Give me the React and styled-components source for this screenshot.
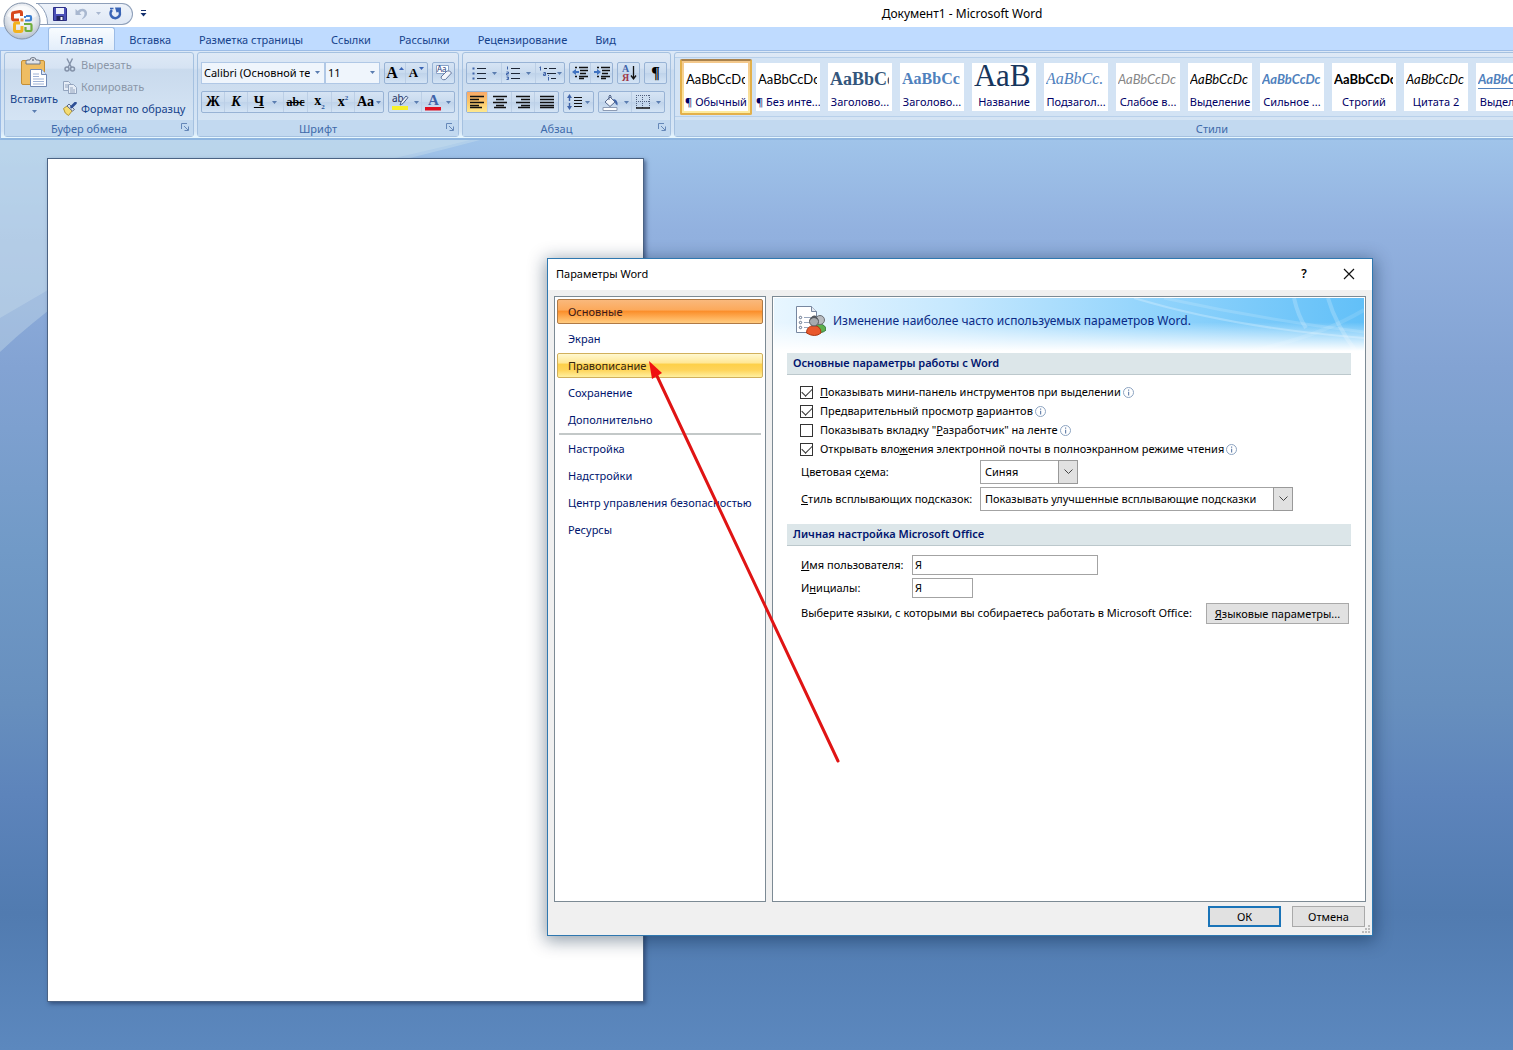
import React, { useState } from 'react';
import styled, { createGlobalStyle, css } from 'styled-components';

const GlobalStyle = createGlobalStyle`
  * {
    box-sizing: border-box;
  }

  body {
    margin: 0;
    background: #527cb1;
    color: #000;
    font-family: 'Noto Sans', 'Open Sans', sans-serif;
    font-size: 11px;
    line-height: 16px;
  }

  button,
  input,
  select {
    font: inherit;
    color: inherit;
  }
`;

const AppWindow = styled.div`
  position: relative;
  display: flex;
  flex-direction: column;
  min-height: 100vh;
  overflow: hidden;
`;

/* ---------- title bar ---------- */

const TitleBar = styled.header`
  display: grid;
  grid-template-columns: 411px 1fr;
  align-items: center;
  height: 27px;
  background: #fff;
`;

const QuickAccess = styled.div`
  display: flex;
  align-items: center;
  gap: 7px;
  padding-left: 36px;
`;

const QuickBar = styled.div`
  position: relative;
  display: flex;
  align-items: center;
  gap: 8px;
  width: 97px;
  height: 22px;
  padding-left: 17px;
  overflow: hidden;
  border: 1px solid #8e9fb9;
  border-left: none;
  border-radius: 0 11px 11px 0;
  background: linear-gradient(#eef3fa, #dfe8f5);

  &::before {
    content: '';
    position: absolute;
    left: -38px;
    top: -6px;
    width: 48px;
    height: 48px;
    border: 1px solid #8e9fb9;
    border-radius: 50%;
    background: #fff;
  }
`;

const IconButton = styled.button`
  display: flex;
  align-items: center;
  justify-content: center;
  padding: 0;
  border: none;
  background: none;
`;

const WindowTitle = styled.h1`
  margin: 0;
  font-size: 12px;
  font-weight: 400;
  text-align: center;
`;

const OfficeButton = styled.button`
  position: absolute;
  z-index: 2;
  left: 3px;
  top: 2px;
  width: 38px;
  height: 38px;
  padding: 0;
  border: none;
  background: none;
`;

/* ---------- ribbon ---------- */

const TabRow = styled.nav`
  display: flex;
  height: 23px;
  padding: 0 0 0 48px;
  background: #bfdbff;
`;

const Tab = styled.button`
  height: 24px;
  padding: 0 13px;
  border: 1px solid transparent;
  border-bottom: none;
  background: none;
  color: #15428b;
  line-height: 20px;
  white-space: nowrap;

  ${(props) =>
    props.$active &&
    css`
      padding: 0 11px;
      border-color: #9cbce6;
      border-radius: 3px 3px 0 0;
      background: linear-gradient(#f8fcff, #e2edfa);
    `}
`;

const Ribbon = styled.section`
  display: flex;
  gap: 3px;
  height: 90px;
  padding: 1px 0 1px 3px;
  overflow: hidden;
  border: 1px solid #9cbce6;
  border-right: none;
  border-bottom: 2px solid #8fb6e0;
  background: linear-gradient(#dbe8f7 0, #d5e3f3 20%, #cbdcf0 22%, #d6e6f6 92%, #e8f8ff 100%);
`;

const Group = styled.div`
  display: flex;
  flex: 0 0 ${(props) => props.$width}px;
  flex-direction: column;
  min-width: 0;
  border: 1px solid #a5c1e0;
  border-radius: 3px;
  background: linear-gradient(#dee9f6 0, #d6e3f3 18%, #c9daed 20%, #d8e7f6 100%);
`;

const GroupBody = styled.div`
  display: flex;
  flex: 1;
`;

const GroupLabel = styled.div`
  position: relative;
  height: 16px;
  padding-right: ${(props) => (props.$launcher ? 20 : 0)}px;
  background: #c2d9f0;
  color: #3e6aaa;
  line-height: 17px;
  text-align: center;

  ${IconButton} {
    position: absolute;
    right: 4px;
    top: 3px;
  }
`;

const PasteButton = styled.button`
  display: flex;
  flex-direction: column;
  align-items: center;
  gap: 3px;
  width: 58px;
  padding: 4px 0 0;
  border: none;
  background: none;
  color: #15428b;
`;

const ClipboardList = styled.div`
  display: flex;
  flex-direction: column;
  padding-top: 1px;
`;

const ClipboardButton = styled.button`
  display: flex;
  align-items: center;
  gap: 4px;
  height: 22px;
  padding: 0;
  border: none;
  background: none;
  color: #15428b;
  white-space: nowrap;

  &:disabled {
    color: #8b97a8;
  }
`;

const ToolRows = styled.div`
  display: flex;
  flex-direction: column;
  gap: 7px;
  padding: 9px 0 0 3px;
`;

const ToolRow = styled.div`
  display: flex;
  gap: 4px;
  height: 22px;
`;

const ToolSet = styled.div`
  display: flex;
  border: 1px solid #98b3d5;
  border-radius: 2px;
  background: linear-gradient(#d6e4f4 0, #c8daee 50%, #bfd3ea 51%, #d4e4f5 100%);
`;

const Tool = styled.button`
  display: flex;
  align-items: center;
  justify-content: center;
  gap: ${(props) => props.$gap || 3}px;
  width: ${(props) => props.$width || 21}px;
  padding: 0;
  border: none;
  border-right: 1px solid #bccfe6;
  background: ${(props) => (props.$active ? 'linear-gradient(#f9a968, #fdc86a 50%, #fde88e)' : 'none')};
  font-family: 'Liberation Serif', serif;
  font-size: ${(props) => props.$size || 14}px;
  font-weight: 700;
  font-style: ${(props) => (props.$italic ? 'italic' : 'normal')};
  text-decoration: ${(props) => props.$decoration || 'none'};

  &:last-child {
    border-right: none;
  }

  sub,
  sup {
    color: #2b579a;
    font-size: 7px;
    line-height: 7px;
  }
`;

const Combos = styled.div`
  display: flex;
`;

const RibbonCombo = styled.span`
  position: relative;
  display: flex;
  width: ${(props) => props.$width}px;
  border: 1px solid #b0c8e6;
  background: #eff5fc;

  select {
    width: 100%;
    padding: 0 14px 0 2px;
    appearance: none;
    border: none;
    background: none;
    overflow: hidden;
  }

  svg {
    position: absolute;
    right: 4px;
    top: 8px;
    pointer-events: none;
  }
`;

const Gallery = styled.div`
  display: flex;
  align-items: flex-start;
  width: 100%;
  height: 60px;
  margin-top: 4px;
  padding: 1px 5px;
  border-top: 1px solid #b8d0ea;
  border-bottom: 1px solid #b8d0ea;
  background: #d3e3f4;
`;

const StyleTile = styled.button`
  display: flex;
  flex: 0 0 72px;
  flex-direction: column;
  height: 56px;
  padding: 2px;
  border: 2px solid ${(props) => (props.$active ? '#e3b04b' : 'transparent')};
  border-top-color: ${(props) => (props.$active ? '#a9824c' : 'transparent')};
  border-radius: 2px;
  background: ${(props) => (props.$active ? 'linear-gradient(#f3c88c, #fdeca0)' : 'none')};
  color: #000066;
`;

const StylePreview = styled.span`
  display: block;
  width: 64px;
  height: 31px;
  padding: 0 3px 0 2px;
  overflow: hidden;
  background: #fff;
  color: ${(props) => props.$color || '#000'};
  font-family: ${(props) => (props.$serif ? "'Liberation Serif', serif" : 'Lato, sans-serif')};
  font-size: ${(props) => props.$size || 13}px;
  font-weight: ${(props) => (props.$bold ? 700 : 400)};
  font-style: ${(props) => (props.$italic ? 'italic' : 'normal')};
  line-height: ${(props) => (props.$size > 20 ? 26 : 32)}px;
  text-align: left;
  white-space: nowrap;

  span {
    display: block;
    overflow: hidden;
    text-decoration: ${(props) => (props.$underline ? 'underline' : 'none')};
    text-underline-offset: 4px;
  }
`;

const StyleName = styled.span`
  display: block;
  width: 64px;
  height: 17px;
  overflow: hidden;
  background: #fff;
  text-align: center;
  white-space: nowrap;
`;

/* ---------- workspace ---------- */

const Workspace = styled.main`
  position: relative;
  flex: 1;
  padding: 18px 47px 48px;
  background: linear-gradient(
    #a0c4ea 0,
    #92b1df 10%,
    #83a3d3 25%,
    #719ac7 45%,
    #678fbe 62%,
    #5d84bb 72%,
    #517bb0 85%,
    #5c88be 100%
  );
`;

const Swoosh = styled.svg`
  position: absolute;
  left: 0;
  top: 0;
`;

const Page = styled.article`
  position: relative;
  width: 597px;
  height: 844px;
  border: 1px solid #4b6384;
  background: #fff;
  box-shadow: 2px 2px 4px rgba(30, 50, 90, 0.6);
`;

/* ---------- options dialog ---------- */

const Dialog = styled.div`
  position: absolute;
  z-index: 3;
  left: 547px;
  top: 258px;
  display: flex;
  flex-direction: column;
  width: 826px;
  border: 1px solid #2f78b0;
  background: #f0f0f0;
  box-shadow: 0 3px 16px 2px rgba(0, 30, 60, 0.42);
`;

const DialogTitle = styled.div`
  display: flex;
  align-items: center;
  height: 31px;
  padding: 0 17px 2px 8px;
  background: #fff;
`;

const DialogName = styled.h2`
  flex: 1;
  margin: 0;
  font-size: 11px;
  font-weight: 400;
`;

const TitleButton = styled(IconButton)`
  width: 12px;
  margin-left: 33px;
  font-size: 12px;
  font-weight: 600;
`;

const DialogBody = styled.div`
  display: grid;
  grid-template-columns: 212px 1fr;
  gap: 6px;
  height: 612px;
  padding: 6px 6px 0;
`;

const SideNav = styled.nav`
  display: flex;
  flex-direction: column;
  gap: 2px;
  padding: 2px;
  border: 1px solid #7c8a94;
  background: #fff;
`;

const NavItem = styled.button`
  height: 25px;
  padding: 0 10px;
  border: 1px solid transparent;
  border-radius: 2px;
  background: none;
  color: #00156e;
  text-align: left;
  white-space: nowrap;

  ${(props) =>
    props.$state === 'selected' &&
    css`
      border-color: #b07a45;
      background: linear-gradient(#f9b87c 0, #fcaa5c 42%, #fb8f2c 50%, #ffb45e 80%, #ffcb80 100%);
      color: #3b1a1a;
    `}

  ${(props) =>
    props.$state === 'hover' &&
    css`
      border-color: #d1b05c;
      background: linear-gradient(#fff8d0 0, #ffe897 38%, #fdd04a 45%, #fed45a 70%, #fff0a0 100%);
      color: #33240f;
    `}
`;

const NavDivider = styled.hr`
  width: 202px;
  height: 2px;
  margin: -1px auto;
  border: none;
  background: #c3c8c8;
`;

const Content = styled.section`
  border: 1px solid #7c8a94;
  background: #fff;
`;

const Banner = styled.div`
  position: relative;
  display: flex;
  align-items: center;
  gap: 7px;
  height: 54px;
  margin: 1px;
  padding: 0 20px 8px;
  overflow: hidden;
  background:
    linear-gradient(rgba(255, 255, 255, 0) 45%, #fff 98%),
    linear-gradient(90deg, #e8f6ff 0, #c6e8fe 30%, #95d5fc 62%, #62c0f8 100%);
  color: #0b2a85;
  font-size: 12px;
`;

const BannerLines = styled.svg`
  position: absolute;
  right: 0;
  top: 0;
`;

const SectionTitle = styled.h3`
  height: 22px;
  margin: 0 14px;
  padding: 0 6px;
  border-bottom: 1px solid #bcc8cc;
  background: #dce6e9;
  color: #00156e;
  font-size: 11px;
  font-weight: 600;
  line-height: 20px;
`;

const Fields = styled.div`
  display: flex;
  flex-direction: column;
  gap: 3px;
  padding: 9px 16px 13px 28px;
`;

const CheckLabel = styled.label`
  display: flex;
  align-items: center;
  gap: 2px;
  height: 16px;
  white-space: nowrap;

  span {
    margin-left: 5px;
  }
`;

const CheckBox = styled.input`
  position: relative;
  width: 13px;
  height: 13px;
  margin: 0 0 0 -1px;
  appearance: none;
  border: 1px solid #333;
  background: #fff;

  &:checked::after {
    content: '';
    position: absolute;
    left: 1px;
    top: 1px;
    width: 9px;
    height: 5px;
    border: solid #333;
    border-width: 0 0 1px 1px;
    transform: rotate(-45deg);
  }
`;

const FieldRow = styled.div`
  display: flex;
  align-items: center;
  height: ${(props) => props.$height || 20}px;
`;

const FieldLabel = styled.label`
  flex: 0 0 ${(props) => props.$width}px;
  white-space: nowrap;
`;

const TextInput = styled.input`
  width: ${(props) => props.$width}px;
  height: 20px;
  padding: 0 2px 1px;
  border: 1px solid #a3a3a3;
  background: #fff;
`;

const SelectBox = styled.span`
  position: relative;
  display: flex;
  width: ${(props) => props.$width}px;
  height: 24px;

  select {
    width: 100%;
    padding: 0 20px 0 4px;
    appearance: none;
    border: 1px solid #a3a3a3;
    border-radius: 0;
    background: #fff;
  }
`;

const SelectArrow = styled.span`
  position: absolute;
  right: 0;
  top: 0;
  display: flex;
  align-items: center;
  justify-content: center;
  width: 20px;
  height: 24px;
  border: 1px solid #999;
  background: #e1e1e1;
  pointer-events: none;
`;

const PushButton = styled.button`
  width: ${(props) => props.$width || 73}px;
  height: 21px;
  padding: 0;
  border: ${(props) => (props.$primary ? '2px solid #1a74b8' : '1px solid #a9a9a9')};
  background: #e1e1e1;
  line-height: 17px;
  white-space: nowrap;
`;

const LanguageRow = styled(FieldRow)`
  justify-content: space-between;
  margin-top: 1px;
`;

const DialogFooter = styled.div`
  position: relative;
  display: flex;
  justify-content: flex-end;
  gap: 11px;
  height: 33px;
  padding: 4px 7px 0;
`;

const Grip = styled.svg`
  position: absolute;
  right: 1px;
  bottom: 1px;
`;

const Pointer = styled.svg`
  position: absolute;
  z-index: 4;
  left: 640px;
  top: 352px;
  pointer-events: none;
`;

/* ---------- icons ---------- */

const DropArrow = ({ color = '#5a7db0' }) => (
  <svg width="5" height="3" viewBox="0 0 5 3">
    <path d="M0 0h5L2.5 3z" fill={color} />
  </svg>
);

const OfficeLogo = () => (
  <svg width="38" height="38" viewBox="0 0 38 38">
    <defs>
      <radialGradient id="orb" cx="50%" cy="35%" r="65%">
        <stop offset="0" stopColor="#fff" />
        <stop offset="0.6" stopColor="#e4e8ee" />
        <stop offset="1" stopColor="#b4bfcd" />
      </radialGradient>
    </defs>
    <circle cx="19" cy="19" r="18" fill="url(#orb)" stroke="#8393aa" />
    <path d="M4 14a16 16 0 0 1 30 0c-9 5-21 5-30 0z" fill="#fff" opacity="0.6" />
    <g fill="none" strokeWidth="3" strokeLinejoin="round">
      <path d="M16 18h-5q-1.500 0-1.500-1.500V12q0-1.500 1.500-1.500L17 9.500q1.500 0 1.500 1.500v3" stroke="#d8481c" />
      <path d="M17 21h-4q-1.500 0-1.500 1.500V28q0 1.500 1.500 1.500h4.500q1.500 0 1.500-1.500v-4" stroke="#f3b21e" />
    </g>
    <g fill="none" strokeWidth="2.200" strokeLinejoin="round">
      <path d="M22 18.500h5q1 0 1-1V15q0-1-1-1h-4" stroke="#3c7fd0" />
      <path d="M23 22h4.500q1 0 1 1v5q0 1-1 1h-4q-1 0-1-1v-3" stroke="#6fae3c" />
    </g>
    <path d="M17.500 16.500h3v3h-3z" fill="#e8893a" />
    <path d="M21 14h2v2h-2z" fill="#3c7fd0" />
    <path d="M21 21h2v2h-2z" fill="#6fae3c" />
  </svg>
);

const SaveIcon = () => (
  <svg width="14" height="14" viewBox="0 0 14 14">
    <path d="M0.500 0.500h12l1 1v12h-13z" fill="#4b50b8" stroke="#2c2f86" />
    <path d="M3 1h8v6H3z" fill="#eef2fb" />
    <path d="M3.500 9h7v4.500h-7z" fill="#23265e" />
    <path d="M7.500 10h2v3h-2z" fill="#fff" />
  </svg>
);

const UndoIcon = () => (
  <svg width="13" height="13" viewBox="0 0 13 13">
    <path d="M0.500 2v6h6L4.500 6C6.500 3.500 9.500 4 9.500 6.500S8 10.500 6.500 12.500C10 11 12.500 8.500 12 5.500 11.500 1.500 6 0 2.800 4z" fill="#a9b8d0" />
  </svg>
);

const RedoIcon = () => (
  <svg width="13" height="13" viewBox="0 0 13 13">
    <path d="M3 3A4.700 4.700 0 1 0 10.300 4" fill="none" stroke="#3a64b5" strokeWidth="2.600" />
    <path d="M6 0.500H12V6.500L9.800 4.800 7.500 5.500z" fill="#3a64b5" />
    <path d="M1 1.500h3.500" stroke="#3a64b5" strokeWidth="1.500" />
  </svg>
);

const CustomizeIcon = () => (
  <svg width="7" height="7" viewBox="0 0 7 7">
    <path d="M1 0h5v1H1zM0.500 3h6l-3 3.500z" fill="#15306e" />
  </svg>
);

const PasteIcon = () => (
  <svg width="28" height="31" viewBox="0 0 28 31">
    <rect x="1.500" y="3.500" width="23" height="24" rx="1.500" fill="#efbd62" stroke="#c38e36" />
    <path d="M6 7V4.500q0-1.500 2-1.500h2q0-2.500 3-2.500t3 2.500h2q2 0 2 1.500V7z" fill="#dfe3ea" stroke="#6d7686" />
    <circle cx="13" cy="3" r="1" fill="#6d7686" />
    <path d="M10.500 12.500h11l5 5v12h-16z" fill="#fff" stroke="#7088b4" />
    <path d="M21.500 12.500v5h5" fill="#dce6f5" stroke="#7088b4" />
    <path d="M13 17h6M13 19.500h6M13 22h11M13 24.500h11M13 27h11" stroke="#9eb2d6" />
  </svg>
);

const CutIcon = () => (
  <svg width="14" height="14" viewBox="0 0 14 14" fill="none" stroke="#8391a8">
    <path d="M4 0.500l4.500 9M9.500 0.500L5 9.500" strokeWidth="1.400" />
    <circle cx="4" cy="11" r="2" strokeWidth="1.500" />
    <circle cx="9.500" cy="11" r="2" strokeWidth="1.500" />
  </svg>
);

const CopyIcon = () => (
  <svg width="14" height="14" viewBox="0 0 14 14" fill="#e6edf7" stroke="#93a4be">
    <path d="M0.500 1.500h5l2 2v7h-7z" />
    <path d="M2 5h3M2 7h3" />
    <path d="M5.500 4.500h5l3 3v6h-8z" />
    <path d="M7 8h3M7 10h5M7 12h5" />
  </svg>
);

const BrushIcon = () => (
  <svg width="14" height="14" viewBox="0 0 14 14">
    <path d="M0.500 6.500L4 4l5 5-3.500 4.500q-4-1.500-5-7z" fill="#f5dc72" stroke="#b0963a" />
    <path d="M4 4l2-2 5.500 5.500L9.500 9z" fill="#dfe5ef" stroke="#5b6b88" />
    <path d="M8.500 5L12.500 1" stroke="#2d4f96" strokeWidth="2.600" strokeLinecap="round" />
  </svg>
);

const LauncherIcon = () => (
  <svg width="8" height="8" viewBox="0 0 8 8" fill="none" stroke="#6487b8">
    <path d="M0.500 6V0.500H6M3 3l4 4M7.500 3.500v4h-4" />
  </svg>
);

const SizeMark = ({ up }) => (
  <svg width="5" height="14" viewBox="0 0 5 14">
    <path d={up ? 'M0 4h5L2.500 1z' : 'M0 1h5L2.500 4z'} fill="#3a64b5" />
  </svg>
);

const ClearIcon = () => (
  <svg width="18" height="18" viewBox="0 0 18 18">
    <path d="M1.500 1.500h12v8h-12z" fill="#fff" stroke="#8aa3c8" />
    <text x="2" y="8" fontSize="8" fontFamily="Noto Sans" fontWeight="400" fill="#1f3f80">Aa</text>
    <path d="M6 13l6-6q3-1 4.500 2l-6 6.500q-4 1-4.500-2.500z" fill="#f3f5fa" stroke="#6478a0" />
  </svg>
);

const HighlightIcon = () => (
  <svg width="17" height="18" viewBox="0 0 17 18">
    <path d="M0 13h16v4H0z" fill="#f6f02a" />
    <text x="0" y="9" fontSize="10" fontFamily="Noto Sans" fontWeight="400" fill="#1f2f60">ab</text>
    <path d="M8 12l1-3 5-6 2 1.500-5 6z" fill="#e8edf5" stroke="#48608c" />
  </svg>
);

const FontColorIcon = () => (
  <svg width="17" height="18" viewBox="0 0 17 18">
    <path d="M0 14h16v3.500H0z" fill="#e01020" />
    <text x="3" y="12" fontSize="15" fontWeight="700" fontFamily="Liberation Serif" fill="#3f63a8">A</text>
  </svg>
);

const ListIcon = ({ numbered }) => (
  <svg width="14" height="14" viewBox="0 0 14 14">
    <path d="M5 2.500h9M5 7.500h9M5 12.500h9" stroke="#1d2636" />
    {numbered ? (
      <path d="M1.500 0.500v3M0.500 6h2v1.500h-2V9h2M0.500 11h2v2.500h-2M1 12h1" fill="none" stroke="#3f63a8" />
    ) : (
      <path d="M0.500 1.500h2v2h-2zM0.500 6.500h2v2h-2zM0.500 11.500h2v2h-2z" fill="#3f63a8" />
    )}
  </svg>
);

const MultiListIcon = () => (
  <svg width="17" height="15" viewBox="0 0 17 15">
    <path d="M5 2.500h3M10 2.500h7M8 7.500h9M12 12.500h5" stroke="#1d2636" />
    <path d="M1.500 0.500v4M0.500 1.500h1M4.500 6.500h2v3h-2V8h2M9.500 11v3.500M9.500 9v1" fill="none" stroke="#3f63a8" />
  </svg>
);

const IndentIcon = ({ more }) => (
  <svg width="16" height="14" viewBox="0 0 16 14">
    <path d="M3 1.500h2M7 1.500h9M8 4.500h8M8 7.500h6M3 10.500h2M7 10.500h9M7 12.500h5" stroke="#111" strokeWidth="1.500" />
    <path d={more ? 'M7 6L3 3v2H0v2h3v2z' : 'M0 6l4-3v2h3v2H4v2z'} fill="#3f72c0" />
  </svg>
);

const SortIcon = () => (
  <svg width="16" height="18" viewBox="0 0 16 18">
    <text x="1" y="8" fontSize="10" fontWeight="700" fontFamily="Liberation Serif" fill="#3f63a8">А</text>
    <text x="1" y="17" fontSize="10" fontWeight="700" fontFamily="Liberation Serif" fill="#a03848">Я</text>
    <path d="M12.500 2v12M10 11.500l2.500 3.500 2.500-3.500" fill="none" stroke="#111" strokeWidth="1.300" />
  </svg>
);

const alignLines = {
  left: 'M0 1.500h14M0 4.500h9M0 7.500h14M0 10.500h9M0 12.500h12',
  center: 'M0 1.500h14M3 4.500h8M0 7.500h14M3 10.500h8M1 12.500h12',
  right: 'M0 1.500h14M5 4.500h9M0 7.500h14M5 10.500h9M2 12.500h12',
  justify: 'M0 1.500h14M0 4.500h14M0 7.500h14M0 10.500h14M0 12.500h14',
};

const AlignIcon = ({ kind }) => (
  <svg width="14" height="14" viewBox="0 0 14 14">
    <path d={alignLines[kind]} stroke="#111" strokeWidth="1.300" />
  </svg>
);

const SpacingIcon = () => (
  <svg width="15" height="16" viewBox="0 0 15 16">
    <path d="M7 3.500h8M7 6.500h8M7 9.500h8M7 12.500h8" stroke="#111" strokeWidth="1.200" />
    <path d="M2.500 0L5 4H3.200v3H1.800V4H0zM2.500 16L0 12h1.800V9h1.400v3H5z" fill="#3f63a8" />
  </svg>
);

const BucketIcon = () => (
  <svg width="17" height="17" viewBox="0 0 17 17">
    <path d="M1 13.500h14v3H1z" fill="#fff" stroke="#8d9bb3" />
    <path d="M3 8l5-5 5 5-5 4.500z" fill="#f2f5fa" stroke="#56688c" />
    <path d="M7 6V2q1-2 2 0v2" fill="none" stroke="#56688c" />
    <path d="M11 5q5 0 4.500 6.500-2.500-1-2.500-3.500z" fill="#3f63a8" />
  </svg>
);

const BordersIcon = () => (
  <svg width="14" height="14" viewBox="0 0 14 14">
    <path d="M0.500 0v13M6.500 0v13M13.500 0v13M0 0.500h14M0 6.500h14" stroke="#50607e" strokeDasharray="1 1" />
    <path d="M0 13h14" stroke="#111" strokeWidth="1.500" />
  </svg>
);

const InfoIcon = () => (
  <svg width="11" height="11" viewBox="0 0 11 11">
    <circle cx="5.500" cy="5.500" r="5" fill="#fff" stroke="#8ca3c0" />
    <path d="M5 2.500h1.200v1.200H5zM5 4.800h1.200V8.500H5z" fill="#6c86ae" />
  </svg>
);

const PeopleIcon = () => (
  <svg width="32" height="32" viewBox="0 0 32 32">
    <path d="M2.500 1.500h15l5 5v21h-20z" fill="#fff" stroke="#7787a0" />
    <path d="M17.500 1.500v5h5" fill="#e6ebf3" stroke="#7787a0" />
    <g fill="none" stroke="#60708a">
      <circle cx="6.500" cy="12.500" r="1.200" />
      <circle cx="6.500" cy="17.500" r="1.200" />
      <circle cx="6.500" cy="22.500" r="1.200" />
      <path d="M10 12.500h7M10 17.500h5M10 22.500h4" stroke="#98a6bc" />
    </g>
    <path d="M21 27q-1-7 5-8 6 1 6 6-4 4-11 2z" fill="#5bb04e" stroke="#34793a" />
    <circle cx="26" cy="15" r="4.500" fill="#b9bcc0" stroke="#6a6e74" />
    <path d="M12.500 28q0-7 7.500-7.500 7 .5 7 7.500-6 5-14.500 0z" fill="#e9582c" stroke="#a83814" />
    <circle cx="20" cy="16.500" r="4.500" fill="#a6aaae" stroke="#54585e" />
    <path d="M16 15q4-4 8 0-1-5-4-4.500T16 15z" fill="#54585e" />
  </svg>
);

const ChevronIcon = () => (
  <svg width="9" height="6" viewBox="0 0 9 6">
    <path d="M0.500 0.500l4 4 4-4" fill="none" stroke="#444" />
  </svg>
);

const CloseIcon = () => (
  <svg width="12" height="12" viewBox="0 0 12 12">
    <path d="M1 1l10 10M11 1L1 11" stroke="#111" strokeWidth="1.200" />
  </svg>
);

/* ---------- data ---------- */

const tabs = ['Главная', 'Вставка', 'Разметка страницы', 'Ссылки', 'Рассылки', 'Рецензирование', 'Вид'];

const styles = [
  { name: '¶ Обычный', sample: 'AaBbCcDc', active: true },
  { name: '¶ Без инте...', sample: 'AaBbCcDc' },
  { name: 'Заголово...', sample: 'AaBbCc', serif: true, bold: true, size: 18, color: '#34567c' },
  { name: 'Заголово...', sample: 'AaBbCc', serif: true, bold: true, size: 16, color: '#4f81bd' },
  { name: 'Название', sample: 'АаВ', serif: true, size: 31, color: '#17365d' },
  { name: 'Подзагол...', sample: 'AaBbCc.', serif: true, italic: true, size: 16, color: '#4f81bd' },
  { name: 'Слабое в...', sample: 'AaBbCcDc', italic: true, color: '#868686' },
  { name: 'Выделение', sample: 'AaBbCcDc', italic: true },
  { name: 'Сильное ...', sample: 'AaBbCcDc', italic: true, bold: true, color: '#4f81bd' },
  { name: 'Строгий', sample: 'AaBbCcDc', bold: true },
  { name: 'Цитата 2', sample: 'AaBbCcDc', italic: true },
  { name: 'Выделен...', sample: 'AaBbCcDc', italic: true, bold: true, underline: true, color: '#4f81bd' },
];

const sections = ['Основные', 'Экран', 'Правописание', 'Сохранение', 'Дополнительно'];
const moreSections = ['Настройка', 'Надстройки', 'Центр управления безопасностью', 'Ресурсы'];

const options = [
  { id: 'mini', text: <><u>П</u>оказывать мини-панель инструментов при выделении</>, checked: true },
  { id: 'preview', text: <>Предварительный просмотр <u>в</u>ариантов</>, checked: true },
  { id: 'developer', text: <>Показывать вкладку "<u>Р</u>азработчик" на ленте</>, checked: false },
  { id: 'reading', text: <>Открывать вло<u>ж</u>ения электронной почты в полноэкранном режиме чтения</>, checked: true },
];

const RibbonGroup = ({ label, width, launcher, children }) => (
  <Group $width={width}>
    <GroupBody>{children}</GroupBody>
    <GroupLabel $launcher={launcher}>
      {label}
      {launcher && (
        <IconButton aria-label={label}>
          <LauncherIcon />
        </IconButton>
      )}
    </GroupLabel>
  </Group>
);

const ClipboardGroup = () => (
  <RibbonGroup label="Буфер обмена" width={190} launcher>
    <PasteButton>
      <PasteIcon />
      <span>Вставить</span>
      <DropArrow />
    </PasteButton>
    <ClipboardList>
      <ClipboardButton disabled>
        <CutIcon />
        Вырезать
      </ClipboardButton>
      <ClipboardButton disabled>
        <CopyIcon />
        Копировать
      </ClipboardButton>
      <ClipboardButton>
        <BrushIcon />
        Формат по образцу
      </ClipboardButton>
    </ClipboardList>
  </RibbonGroup>
);

const FontGroup = () => (
  <RibbonGroup label="Шрифт" width={262} launcher>
    <ToolRows>
      <ToolRow>
        <Combos>
          <RibbonCombo $width={124}>
            <select aria-label="Шрифт">
              <option>Calibri (Основной текст)</option>
            </select>
            <DropArrow />
          </RibbonCombo>
          <RibbonCombo $width={55}>
            <select aria-label="Размер шрифта">
              <option>11</option>
            </select>
            <DropArrow />
          </RibbonCombo>
        </Combos>
        <ToolSet>
          <Tool $size={16} $gap={1}>A<SizeMark up /></Tool>
          <Tool $size={13} $gap={1}>A<SizeMark /></Tool>
        </ToolSet>
        <ToolSet>
          <Tool aria-label="Очистить формат"><ClearIcon /></Tool>
        </ToolSet>
      </ToolRow>
      <ToolRow>
        <ToolSet>
          <Tool $width={23}>Ж</Tool>
          <Tool $width={23} $italic>К</Tool>
          <Tool $width={36} $gap={8}><u>Ч</u><DropArrow /></Tool>
          <Tool $width={24} $size={12} $decoration="line-through">abc</Tool>
          <Tool $width={24}><span>x<sub>2</sub></span></Tool>
          <Tool $width={23}><span>x<sup>2</sup></span></Tool>
          <Tool $width={28} $gap={2}>Aa<DropArrow /></Tool>
        </ToolSet>
        <ToolSet>
          <Tool $width={33} $gap={5} aria-label="Выделение цветом"><HighlightIcon /><DropArrow /></Tool>
          <Tool $width={32} $gap={4} aria-label="Цвет текста"><FontColorIcon /><DropArrow /></Tool>
        </ToolSet>
      </ToolRow>
    </ToolRows>
  </RibbonGroup>
);

const ParagraphGroup = () => (
  <RibbonGroup label="Абзац" width={209} launcher>
    <ToolRows>
      <ToolRow>
        <ToolSet>
          <Tool $width={35} $gap={6} aria-label="Маркеры"><ListIcon /><DropArrow /></Tool>
          <Tool $width={34} $gap={6} aria-label="Нумерация"><ListIcon numbered /><DropArrow /></Tool>
          <Tool $width={28} $gap={1} aria-label="Многоуровневый список"><MultiListIcon /><DropArrow /></Tool>
        </ToolSet>
        <ToolSet>
          <Tool aria-label="Уменьшить отступ"><IndentIcon /></Tool>
          <Tool aria-label="Увеличить отступ"><IndentIcon more /></Tool>
        </ToolSet>
        <ToolSet>
          <Tool aria-label="Сортировка"><SortIcon /></Tool>
        </ToolSet>
        <ToolSet>
          <Tool $size={16}>¶</Tool>
        </ToolSet>
      </ToolRow>
      <ToolRow>
        <ToolSet>
          <Tool $active aria-label="По левому краю"><AlignIcon kind="left" /></Tool>
          <Tool $width={24} aria-label="По центру"><AlignIcon kind="center" /></Tool>
          <Tool $width={23} aria-label="По правому краю"><AlignIcon kind="right" /></Tool>
          <Tool $width={23} aria-label="По ширине"><AlignIcon kind="justify" /></Tool>
        </ToolSet>
        <ToolSet>
          <Tool $width={29} aria-label="Интервал"><SpacingIcon /><DropArrow /></Tool>
        </ToolSet>
        <ToolSet>
          <Tool $width={33} $gap={5} aria-label="Заливка"><BucketIcon /><DropArrow /></Tool>
          <Tool $width={32} $gap={6} aria-label="Границы"><BordersIcon /><DropArrow /></Tool>
        </ToolSet>
      </ToolRow>
    </ToolRows>
  </RibbonGroup>
);

const StylesGroup = () => (
  <RibbonGroup label="Стили" width={1076}>
    <Gallery>
      {styles.map((item, index) => (
        <StyleTile key={index} $active={item.active}>
          <StylePreview
            $serif={item.serif}
            $bold={item.bold}
            $italic={item.italic}
            $underline={item.underline}
            $size={item.size}
            $color={item.color}
          >
            <span>{item.sample}</span>
          </StylePreview>
          <StyleName>{item.name}</StyleName>
        </StyleTile>
      ))}
    </Gallery>
  </RibbonGroup>
);

const OptionsDialog = () => {
  const [checks, setChecks] = useState(options.map((option) => option.checked));
  const [userName, setUserName] = useState('Я');
  const [initials, setInitials] = useState('Я');

  const toggle = (index) => {
    setChecks(checks.map((value, i) => (i === index ? !value : value)));
  };

  const navState = (name) => {
    if (name === 'Основные') return 'selected';
    if (name === 'Правописание') return 'hover';
    return undefined;
  };

  return (
    <Dialog role="dialog" aria-labelledby="dialog-name">
      <DialogTitle>
        <DialogName id="dialog-name">Параметры Word</DialogName>
        <TitleButton>?</TitleButton>
        <TitleButton aria-label="Закрыть"><CloseIcon /></TitleButton>
      </DialogTitle>

      <DialogBody>
        <SideNav>
          {sections.map((name) => (
            <NavItem key={name} $state={navState(name)}>{name}</NavItem>
          ))}
          <NavDivider />
          {moreSections.map((name) => (
            <NavItem key={name}>{name}</NavItem>
          ))}
        </SideNav>

        <Content>
          <Banner>
            <BannerLines width="260" height="56" viewBox="0 0 260 56" fill="none" stroke="#fff">
              <path d="M30 0q100 30 230 40" opacity="0.25" strokeWidth="2" />
              <path d="M60 0q100 22 200 34" opacity="0.15" strokeWidth="3" />
              <path d="M224 0q8 28 30 56M190 0q4 18 12 30" opacity="0.2" strokeWidth="4" />
              <path d="M130 56q80-14 130-44" opacity="0.12" strokeWidth="4" />
            </BannerLines>
            <PeopleIcon />
            Изменение наиболее часто используемых параметров Word.
          </Banner>

          <SectionTitle>Основные параметры работы с Word</SectionTitle>
          <Fields>
            {options.map((option, index) => (
              <CheckLabel key={option.id}>
                <CheckBox type="checkbox" checked={checks[index]} onChange={() => toggle(index)} />
                <span>{option.text}</span>
                <InfoIcon />
              </CheckLabel>
            ))}
            <FieldRow $height={24}>
              <FieldLabel htmlFor="scheme" $width={179}>Цветовая с<u>х</u>ема:</FieldLabel>
              <SelectBox $width={98}>
                <select id="scheme">
                  <option>Синяя</option>
                </select>
                <SelectArrow><ChevronIcon /></SelectArrow>
              </SelectBox>
            </FieldRow>
            <FieldRow $height={24}>
              <FieldLabel htmlFor="tips" $width={179}><u>С</u>тиль всплывающих подсказок:</FieldLabel>
              <SelectBox $width={313}>
                <select id="tips">
                  <option>Показывать улучшенные всплывающие подсказки</option>
                </select>
                <SelectArrow><ChevronIcon /></SelectArrow>
              </SelectBox>
            </FieldRow>
          </Fields>

          <SectionTitle>Личная настройка Microsoft Office</SectionTitle>
          <Fields>
            <FieldRow>
              <FieldLabel htmlFor="user" $width={111}><u>И</u>мя пользователя:</FieldLabel>
              <TextInput id="user" $width={186} value={userName} onChange={(e) => setUserName(e.target.value)} />
            </FieldRow>
            <FieldRow>
              <FieldLabel htmlFor="initials" $width={111}>И<u>н</u>ициалы:</FieldLabel>
              <TextInput id="initials" $width={61} value={initials} onChange={(e) => setInitials(e.target.value)} />
            </FieldRow>
            <LanguageRow $height={22}>
              <span>Выберите языки, с которыми вы собираетесь работать в Microsoft Office:</span>
              <PushButton $width={143}><u>Я</u>зыковые параметры...</PushButton>
            </LanguageRow>
          </Fields>
        </Content>
      </DialogBody>

      <DialogFooter>
        <PushButton $primary>ОК</PushButton>
        <PushButton>Отмена</PushButton>
        <Grip width="9" height="9" viewBox="0 0 9 9">
          <path d="M6 0h2v2H6zM3 3h2v2H3zM6 3h2v2H6zM0 6h2v2H0zM3 6h2v2H3zM6 6h2v2H6z" fill="#bcbcbc" />
        </Grip>
      </DialogFooter>
    </Dialog>
  );
};

const App = () => {
  const [activeTab, setActiveTab] = useState('Главная');

  return (
    <AppWindow>
      <GlobalStyle />

      <TitleBar>
        <QuickAccess>
          <QuickBar>
            <IconButton aria-label="Сохранить"><SaveIcon /></IconButton>
            <IconButton aria-label="Отменить"><UndoIcon /></IconButton>
            <DropArrow color="#a9b8d0" />
            <IconButton aria-label="Повторить"><RedoIcon /></IconButton>
          </QuickBar>
          <IconButton aria-label="Настройка панели"><CustomizeIcon /></IconButton>
        </QuickAccess>
        <WindowTitle>Документ1 - Microsoft Word</WindowTitle>
      </TitleBar>
      <OfficeButton aria-label="Office"><OfficeLogo /></OfficeButton>

      <TabRow>
        {tabs.map((tab) => (
          <Tab key={tab} $active={tab === activeTab} onClick={() => setActiveTab(tab)}>
            {tab}
          </Tab>
        ))}
      </TabRow>

      <Ribbon>
        <ClipboardGroup />
        <FontGroup />
        <ParagraphGroup />
        <StylesGroup />
      </Ribbon>

      <Workspace>
        <Swoosh width="480" height="240" viewBox="0 0 480 240">
          <path d="M0 0H480C330 40 150 70 0 212z" fill="#d2e4ee" opacity="0.35" />
          <path d="M0 0H470C330 36 160 60 48 150L0 178z" fill="#d2e4ee" opacity="0.3" />
        </Swoosh>
        <Page />
      </Workspace>

      <OptionsDialog />

      <Pointer width="202" height="414" viewBox="0 0 202 414">
        <path d="M17 24L198 409" stroke="#e01414" strokeWidth="3" strokeLinecap="round" />
        <path d="M9 9L22 21 12 27z" fill="#f01010" />
      </Pointer>
    </AppWindow>
  );
};

export default App;
